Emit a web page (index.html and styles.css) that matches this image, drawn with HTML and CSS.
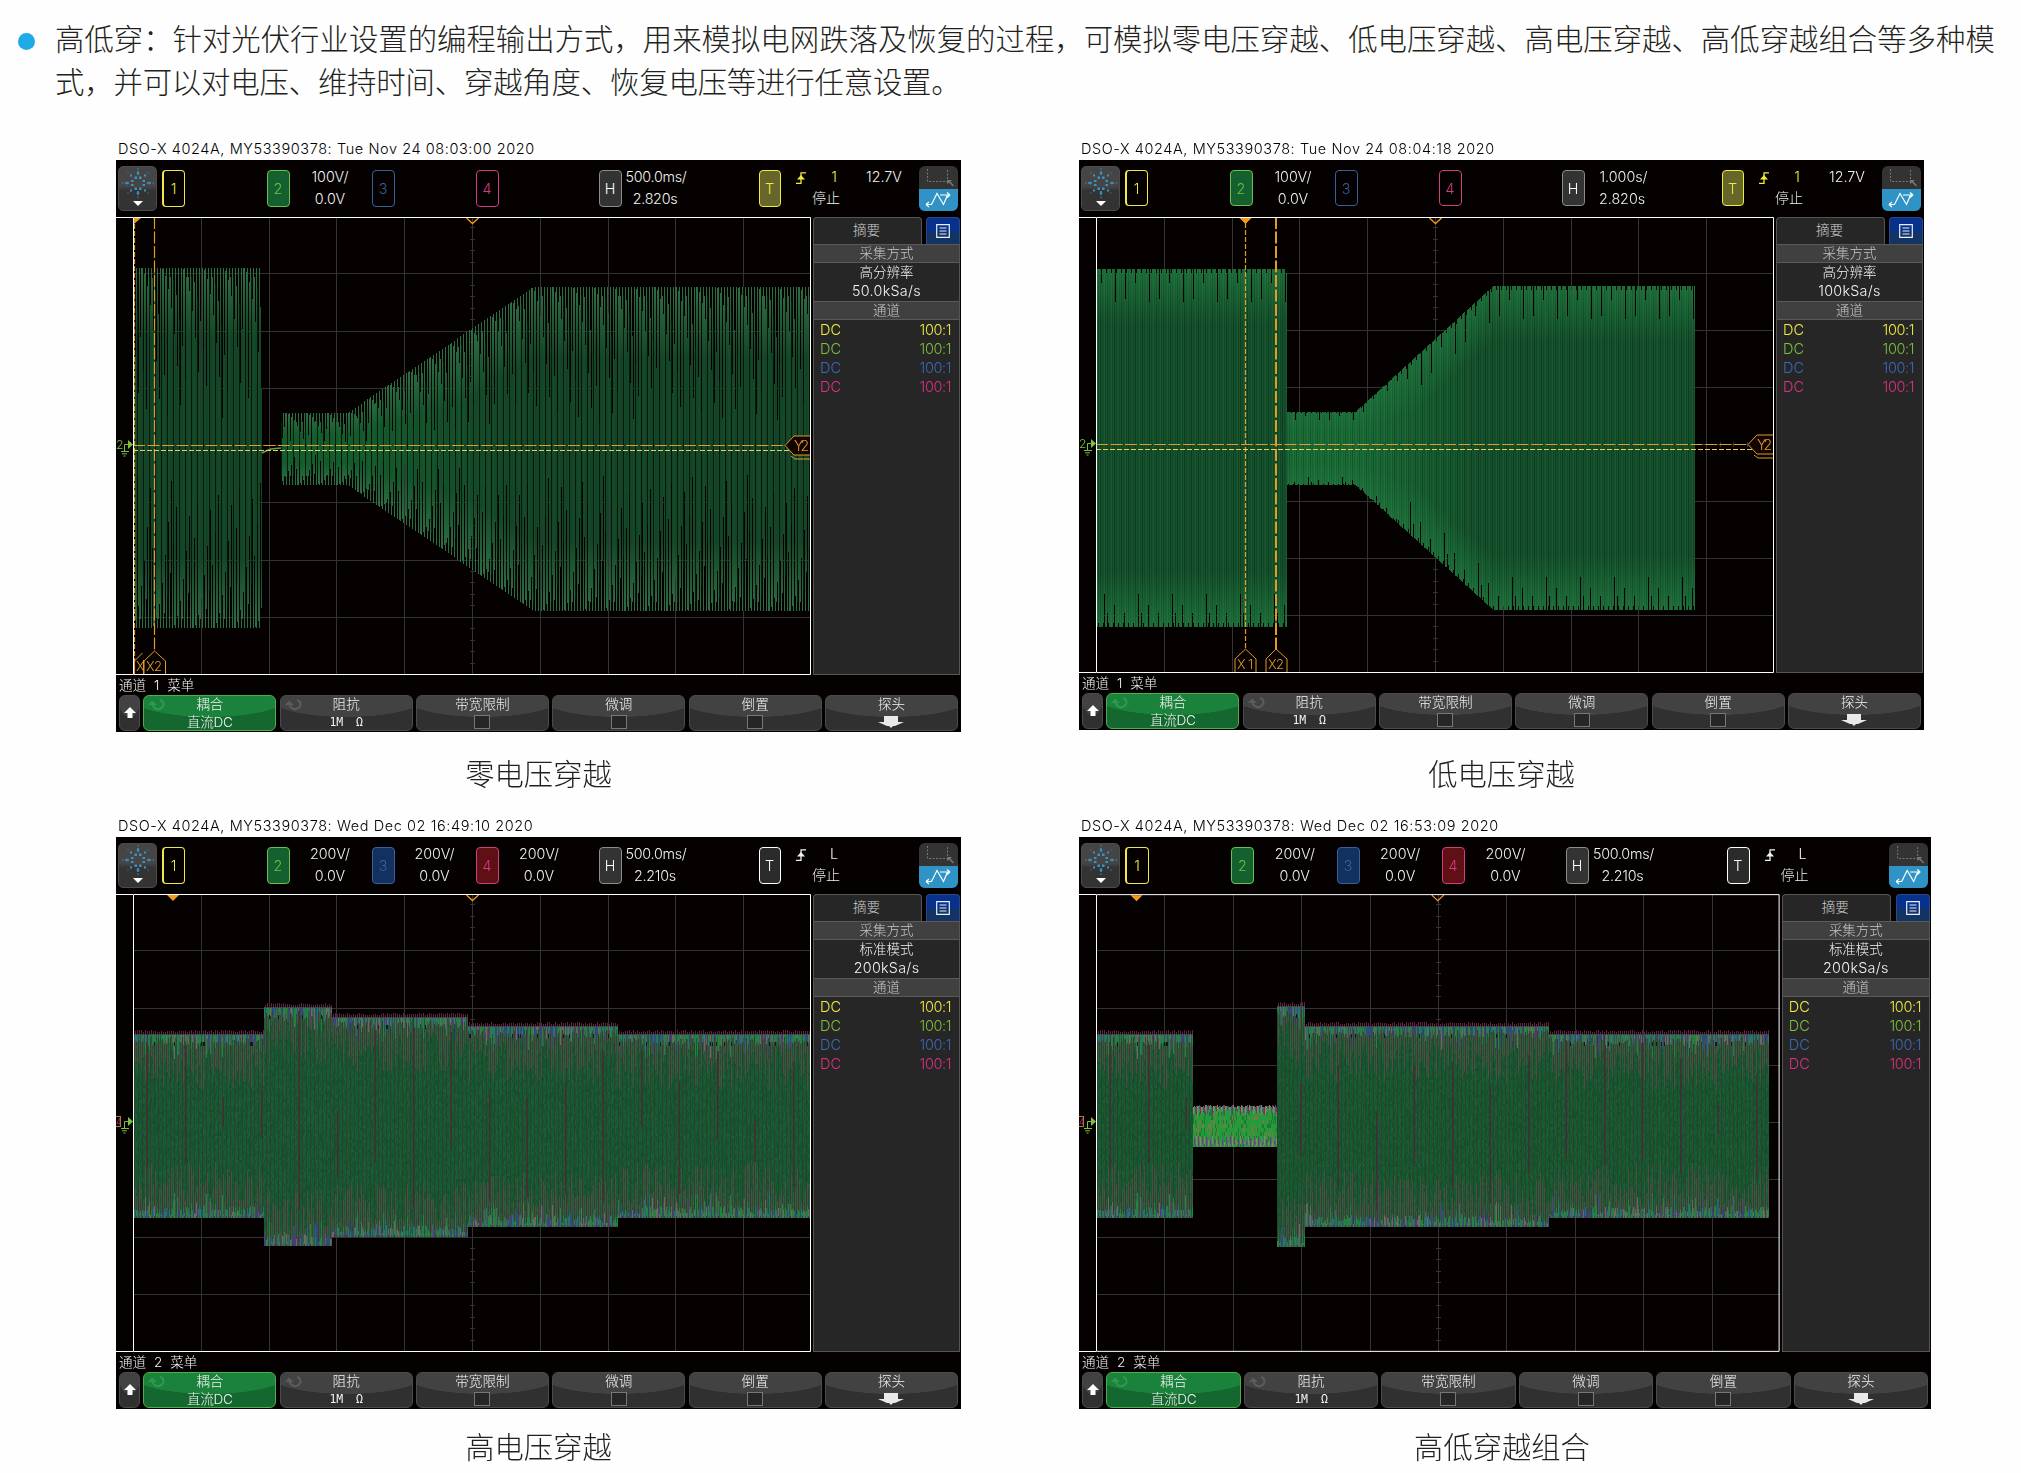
FILE: index.html
```html
<!DOCTYPE html>
<html lang="zh-CN">
<head>
<meta charset="utf-8">
<title>高低穿</title>
<link rel="stylesheet" href="styles.css">
</head>
<body>
<svg class="defs" width="0" height="0">
  <symbol id="spark" viewBox="0 0 32 30">
    <g fill="#3a93c4">
      <path d="M12.500 8.500h2.500v2.500h-2.500zM17 8.500h2.500v2.500H17zM9 12h2.500v2H9zM20.500 12H23v2h-2.500zM9 16h2.500v2H9zM20.500 16H23v2h-2.500zM12.500 19.500h2.500V22h-2.500zM17 19.500h2.500V22H17z"/>
      <path d="M15.200 3h1.600v4h-1.600zM14.500 4.500h3v1h-3zM15.200 23h1.600v4h-1.600zM14.500 24.500h3v1h-3zM3 14.200h4v1.600H3zM4.500 13.500h1v3h-1zM25 14.200h4v1.600h-4zM26.500 13.500h1v3h-1z"/>
      <path d="M8 6.500h2v2H8zM22 6.500h2v2h-2zM8 21.500h2v2H8zM22 21.500h2v2h-2zM15.500 0h1v1.500h-1zM15.500 28.500h1V30h-1zM0 14.500h1.500v1H0zM30.500 14.500H32v1h-1.500zM5.500 4.500h1v1h-1zM25.500 4.500h1v1h-1zM5.500 24.500h1v1h-1zM25.500 24.500h1v1h-1z"/>
    </g>
  </symbol>
  <symbol id="tri" viewBox="0 0 10 5"><path d="M0 0h10L5 5z" fill="#fff"/></symbol>
  <symbol id="edge" viewBox="0 0 10 12"><path d="M0 11.500h5V.800h5" fill="none" stroke="currentColor" stroke-width="1.300"/><path d="M1 7.500h8L5 3z" fill="currentColor"/></symbol>
  <symbol id="zoomicon" viewBox="0 0 39 23"><path d="M8.500 3v12.500h20V3" fill="none" stroke="#777" stroke-dasharray="2 1.500"/><path d="M28 14h5l-1.700 1.500 3.700 4-1 1-4-4-2 1.500z" fill="#777"/></symbol>
  <symbol id="waveicon" viewBox="0 0 39 22"><path d="M7 15.500h5.500L18 4.500l6.500 11L28.500 6H21M24.500 6H30M7 15.500l3-2.500M7 15.500l3 2.500M31 6l-3-2.500M31 6l-3 2.500" fill="none" stroke="#fff" stroke-width="1.200"/></symbol>
  <symbol id="list" viewBox="0 0 14 14"><path d="M.700.700h12.600v12.600H.700zM3.500 4h7M3.500 7h7M3.500 10h7" fill="none" stroke="#e8eefc" stroke-width="1.200"/></symbol>
  <symbol id="up" viewBox="0 0 12 11"><path d="M6 0l6 6H8.500v5h-5V6H0z" fill="#fff"/></symbol>
  <symbol id="down" viewBox="0 0 26 12"><path d="M6 0h14v6h6l-9 4h-2l-2 2-2-2H9L0 6h6z" fill="#e9e9e9"/></symbol>
  <symbol id="turn" viewBox="0 0 18 14"><path d="M12 2c4 1 4.500 5 2 7.500S6 12 4.500 6.500" fill="none" stroke="currentColor" stroke-width="2"/><path d="M0 7l4-4.500L9 7z" fill="currentColor"/></symbol>
  <symbol id="ground" viewBox="0 0 12 18"><path d="M3.500 12V5.500H8M-1 12.500h9M1 14.800h5M2.500 17h2" fill="none" stroke="#7cc03c" stroke-width="1"/><path d="M7 1l5 4.500L7 10z" fill="#7cc03c"/></symbol>
</svg>

<main class="page">
  <section class="intro">
    <i class="bullet"></i>
    <p>高低穿：针对光伏行业设置的编程输出方式，用来模拟电网跌落及恢复的过程，可模拟零电压穿越、低电压穿越、高电压穿越、高低穿越组合等多种模<br><span class="second">式，并可以对电压、维持时间、穿越角度、恢复电压等进行任意设置。</span></p>
  </section>

  <section class="figures">
    <figure>
      <div class="stamp">DSO-X 4024A, MY53390378: Tue Nov 24 08:03:00 2020</div>
      <div class="scope">
        <header class="topbar">
          <div class="logo"><svg class="spark"><use href="#spark"/></svg><svg class="tri"><use href="#tri"/></svg></div>
          <b class="box c1">1</b>
          <b class="box c2 on">2</b><div class="lab l2"><span>100V/</span><span>0.0V</span></div>
          <b class="box c3">3</b>
          <b class="box c4">4</b>
          <b class="box hz">H</b><div class="lab lh"><span>500.0ms/</span><span>2.820s</span></div>
          <b class="box tr yellow">T</b>
          <div class="trig yellow"><svg class="edge"><use href="#edge"/></svg><span class="src">1</span><span class="lvl">12.7V</span><span class="run">停止</span></div>
          <div class="nav"><svg><use href="#zoomicon"/></svg><svg><use href="#waveicon"/></svg></div>
        </header>
        <div class="main">
          <div class="gutter"><span class="g2">2</span><svg><use href="#ground"/></svg></div>
          <div class="plot">
            <canvas width="678" height="458" data-trace="zero"></canvas>
            <svg viewBox="0 0 678 458">
              <path d="M1 1h7L1 7z" fill="#f29a1f"/>
              <path class="chev" d="M333.500 1l6 5.500 6-5.500"/>
              <path class="cx" d="M1.500 0v458"/><path class="cx long" d="M21.500 0v434"/>
              <path class="cy long" d="M0 228.500h655"/><path class="cy pale" d="M0 233.500h657"/>
              <path class="flag" d="M1.500 457v-13l8-8M10.500 443v14"/><text class="ft" x="3" y="454">X</text>
              <path class="flag" d="M11 457v-13l10.500-10L32.500 444v13"/><text class="ft" x="13" y="454" textLength="16">X2</text>
              <path class="flag" d="M658 239l4 3h15"/><path class="flag fill" d="M677 219h-16l-9 9.500 9 9.500h16"/><text class="ft y" x="661" y="234" textLength="15">Y2</text>
              <path class="frame" d="M.500.500h677v457H.500z"/>
            </svg>
          </div>
          <aside class="side">
            <div class="tabs"><span>摘要</span><i><svg><use href="#list"/></svg></i></div>
            <h4>采集方式</h4><div class="acq"><span>高分辨率</span><span>50.0kSa/s</span></div><h4>通道</h4>
            <ul><li class="y">DC<em>100:1</em></li><li class="g">DC<em>100:1</em></li><li class="b">DC<em>100:1</em></li><li class="m">DC<em>100:1</em></li></ul>
          </aside>
        </div>
        <div class="menu">通道 1 菜单</div>
        <footer class="keys">
          <div class="key upkey"><svg><use href="#up"/></svg></div>
          <div class="key act"><svg class="turn"><use href="#turn"/></svg><span>耦合</span><span>直流DC</span></div>
          <div class="key"><svg class="turn"><use href="#turn"/></svg><span>阻抗</span><span class="ohm">1M&nbsp; Ω</span></div>
          <div class="key"><span>带宽限制</span><i></i></div>
          <div class="key"><span>微调</span><i></i></div>
          <div class="key"><span>倒置</span><i></i></div>
          <div class="key"><span>探头</span><svg class="down"><use href="#down"/></svg></div>
        </footer>
      </div>
      <figcaption>零电压穿越</figcaption>
    </figure>

    <figure>
      <div class="stamp">DSO-X 4024A, MY53390378: Tue Nov 24 08:04:18 2020</div>
      <div class="scope short">
        <header class="topbar">
          <div class="logo"><svg class="spark"><use href="#spark"/></svg><svg class="tri"><use href="#tri"/></svg></div>
          <b class="box c1">1</b>
          <b class="box c2 on">2</b><div class="lab l2"><span>100V/</span><span>0.0V</span></div>
          <b class="box c3">3</b>
          <b class="box c4">4</b>
          <b class="box hz">H</b><div class="lab lh"><span>1.000s/</span><span>2.820s</span></div>
          <b class="box tr yellow">T</b>
          <div class="trig yellow"><svg class="edge"><use href="#edge"/></svg><span class="src">1</span><span class="lvl">12.7V</span><span class="run">停止</span></div>
          <div class="nav"><svg><use href="#zoomicon"/></svg><svg><use href="#waveicon"/></svg></div>
        </header>
        <div class="main">
          <div class="gutter"><span class="g2">2</span><svg><use href="#ground"/></svg></div>
          <div class="plot">
            <canvas width="678" height="456" data-trace="low"></canvas>
            <svg viewBox="0 0 678 456">
              <path d="M143.500 1h12l-6 6z" fill="#f29a1f"/>
              <path class="chev" d="M333.500 1l6 5.500 6-5.500"/>
              <path class="cx" d="M149.500 6v427"/><path class="cx long bold" d="M180 0v433"/>
              <path class="cy long" d="M0 227.500h655"/><path class="cy pale" d="M0 232.500h657"/>
              <path class="flag" d="M139 455v-13l10.500-10L160 442v13"/><text class="ft" x="141" y="452" textLength="16">X1</text>
              <path class="flag" d="M170 455v-13l10-10L191 442v13"/><text class="ft" x="172" y="452" textLength="16">X2</text>
              <path class="flag" d="M658 238l4 3h15"/><path class="flag fill" d="M677 218h-16l-9 9.500 9 9.500h16"/><text class="ft y" x="661" y="233" textLength="15">Y2</text>
              <path class="frame" d="M.500.500h677v455H.500z"/>
            </svg>
          </div>
          <aside class="side">
            <div class="tabs"><span>摘要</span><i><svg><use href="#list"/></svg></i></div>
            <h4>采集方式</h4><div class="acq"><span>高分辨率</span><span>100kSa/s</span></div><h4>通道</h4>
            <ul><li class="y">DC<em>100:1</em></li><li class="g">DC<em>100:1</em></li><li class="b">DC<em>100:1</em></li><li class="m">DC<em>100:1</em></li></ul>
          </aside>
        </div>
        <div class="menu">通道 1 菜单</div>
        <footer class="keys">
          <div class="key upkey"><svg><use href="#up"/></svg></div>
          <div class="key act"><svg class="turn"><use href="#turn"/></svg><span>耦合</span><span>直流DC</span></div>
          <div class="key"><svg class="turn"><use href="#turn"/></svg><span>阻抗</span><span class="ohm">1M&nbsp; Ω</span></div>
          <div class="key"><span>带宽限制</span><i></i></div>
          <div class="key"><span>微调</span><i></i></div>
          <div class="key"><span>倒置</span><i></i></div>
          <div class="key"><span>探头</span><svg class="down"><use href="#down"/></svg></div>
        </footer>
      </div>
      <figcaption>低电压穿越</figcaption>
    </figure>

    <figure>
      <div class="stamp">DSO-X 4024A, MY53390378: Wed Dec 02 16:49:10 2020</div>
      <div class="scope">
        <header class="topbar">
          <div class="logo"><svg class="spark"><use href="#spark"/></svg><svg class="tri"><use href="#tri"/></svg></div>
          <b class="box c1">1</b>
          <b class="box c2 on">2</b><div class="lab l2"><span>200V/</span><span>0.0V</span></div>
          <b class="box c3 on">3</b><div class="lab l3"><span>200V/</span><span>0.0V</span></div>
          <b class="box c4 on">4</b><div class="lab l4"><span>200V/</span><span>0.0V</span></div>
          <b class="box hz">H</b><div class="lab lh"><span>500.0ms/</span><span>2.210s</span></div>
          <b class="box tr">T</b>
          <div class="trig"><svg class="edge"><use href="#edge"/></svg><span class="src">L</span><span class="run">停止</span></div>
          <div class="nav"><svg><use href="#zoomicon"/></svg><svg><use href="#waveicon"/></svg></div>
        </header>
        <div class="main">
          <div class="gutter"><span class="g2 multi">4</span><svg><use href="#ground"/></svg></div>
          <div class="plot">
            <canvas width="678" height="458" data-trace="high"></canvas>
            <svg viewBox="0 0 678 458">
              <path d="M34 1h12l-6 6z" fill="#f29a1f"/>
              <path class="chev" d="M333.500 1l6 5.500 6-5.500"/>
              <path class="frame" d="M.500.500h677v457H.500z"/>
            </svg>
          </div>
          <aside class="side">
            <div class="tabs"><span>摘要</span><i><svg><use href="#list"/></svg></i></div>
            <h4>采集方式</h4><div class="acq"><span>标准模式</span><span>200kSa/s</span></div><h4>通道</h4>
            <ul><li class="y">DC<em>100:1</em></li><li class="g">DC<em>100:1</em></li><li class="b">DC<em>100:1</em></li><li class="m">DC<em>100:1</em></li></ul>
          </aside>
        </div>
        <div class="menu">通道 2 菜单</div>
        <footer class="keys">
          <div class="key upkey"><svg><use href="#up"/></svg></div>
          <div class="key act"><svg class="turn"><use href="#turn"/></svg><span>耦合</span><span>直流DC</span></div>
          <div class="key"><svg class="turn"><use href="#turn"/></svg><span>阻抗</span><span class="ohm">1M&nbsp; Ω</span></div>
          <div class="key"><span>带宽限制</span><i></i></div>
          <div class="key"><span>微调</span><i></i></div>
          <div class="key"><span>倒置</span><i></i></div>
          <div class="key"><span>探头</span><svg class="down"><use href="#down"/></svg></div>
        </footer>
      </div>
      <figcaption>高电压穿越</figcaption>
    </figure>

    <figure class="wide">
      <div class="stamp">DSO-X 4024A, MY53390378: Wed Dec 02 16:53:09 2020</div>
      <div class="scope">
        <header class="topbar">
          <div class="logo"><svg class="spark"><use href="#spark"/></svg><svg class="tri"><use href="#tri"/></svg></div>
          <b class="box c1">1</b>
          <b class="box c2 on">2</b><div class="lab l2"><span>200V/</span><span>0.0V</span></div>
          <b class="box c3 on">3</b><div class="lab l3"><span>200V/</span><span>0.0V</span></div>
          <b class="box c4 on">4</b><div class="lab l4"><span>200V/</span><span>0.0V</span></div>
          <b class="box hz">H</b><div class="lab lh"><span>500.0ms/</span><span>2.210s</span></div>
          <b class="box tr">T</b>
          <div class="trig"><svg class="edge"><use href="#edge"/></svg><span class="src">L</span><span class="run">停止</span></div>
          <div class="nav"><svg><use href="#zoomicon"/></svg><svg><use href="#waveicon"/></svg></div>
        </header>
        <div class="main">
          <div class="gutter"><span class="g2 multi">4</span><svg><use href="#ground"/></svg></div>
          <div class="plot">
            <canvas width="684" height="458" data-trace="combo"></canvas>
            <svg viewBox="0 0 684 458">
              <path d="M34.500 1h12l-6 6z" fill="#f29a1f"/>
              <path class="chev" d="M336 1l6 5.500 6-5.500"/>
              <path class="frame" d="M.500.500h683v457H.500z"/>
            </svg>
          </div>
          <aside class="side">
            <div class="tabs"><span>摘要</span><i><svg><use href="#list"/></svg></i></div>
            <h4>采集方式</h4><div class="acq"><span>标准模式</span><span>200kSa/s</span></div><h4>通道</h4>
            <ul><li class="y">DC<em>100:1</em></li><li class="g">DC<em>100:1</em></li><li class="b">DC<em>100:1</em></li><li class="m">DC<em>100:1</em></li></ul>
          </aside>
        </div>
        <div class="menu">通道 2 菜单</div>
        <footer class="keys">
          <div class="key upkey"><svg><use href="#up"/></svg></div>
          <div class="key act"><svg class="turn"><use href="#turn"/></svg><span>耦合</span><span>直流DC</span></div>
          <div class="key"><svg class="turn"><use href="#turn"/></svg><span>阻抗</span><span class="ohm">1M&nbsp; Ω</span></div>
          <div class="key"><span>带宽限制</span><i></i></div>
          <div class="key"><span>微调</span><i></i></div>
          <div class="key"><span>倒置</span><i></i></div>
          <div class="key"><span>探头</span><svg class="down"><use href="#down"/></svg></div>
        </footer>
      </div>
      <figcaption>高低穿越组合</figcaption>
    </figure>
  </section>
</main>
<script src="traces.js"></script>
</body>
</html>
```

FILE: styles.css
```css
* { box-sizing: border-box; }
body { margin: 0; background: #fefefe; color: #231f20; font-family: "Noto Sans CJK SC", sans-serif; }
.defs { display: block; height: 0; }
.page { width: 2021px; height: 1473px; overflow: hidden; }

.intro { display: flex; height: 137px; padding: 16px 0 0 18px; }
.bullet { flex: none; width: 17px; height: 17px; margin-top: 17px; border-radius: 50%; background: #1eaae6; }
.intro p { margin: 0 0 0 20px; font-size: 29.400px; font-weight: 300; line-height: 42.500px; white-space: nowrap; }
.second { letter-spacing: -.18px; }

.figures { display: grid; grid-template-columns: 845px 852px; grid-template-rows: 677px 659px; column-gap: 118px; padding-left: 116px; }
figure { margin: 0; width: 845px; }
figure.wide { width: 852px; }
.stamp { height: 23px; padding-left: 2px; font: 300 14.500px/24px Inter, "Liberation Sans", sans-serif; letter-spacing: .58px; color: #000; white-space: nowrap; }
figcaption { height: 44px; margin-top: 18px; text-align: center; font-size: 29.300px; font-weight: 300; line-height: 44px; }
figure:nth-child(n+3) figcaption { margin-top: 14px; }
figure.wide figcaption { padding-right: 6px; }

.scope { --plot: 458px; height: 572px; background: #050101; color: #f2f2f2; font: 300 14.300px/22px Inter, "Noto Sans CJK SC", sans-serif; }
.scope.short { --plot: 456px; height: 570px; }
.short + figcaption { margin-top: 20px; }

.topbar {
  display: grid; height: 57px;
  grid-template-columns: minmax(0,2fr) minmax(0,39fr) minmax(0,5fr) minmax(0,23fr) minmax(0,82fr) minmax(0,23fr) minmax(0,82fr) minmax(0,23fr) minmax(0,81fr) minmax(0,23fr) minmax(0,82fr) minmax(0,18fr) minmax(0,23fr) minmax(0,68fr) minmax(0,69fr) minmax(0,22fr) minmax(0,138fr) minmax(0,39fr) minmax(0,3fr);
}
.topbar > * { grid-row: 1; }
.logo { grid-column: 2; display: flex; flex-direction: column; align-items: center; height: 45px; margin-top: 6px; border: 1px solid #4c4c4c; border-radius: 5px; background: linear-gradient(#454545 45%, #333 55%); }
.spark { width: 32px; height: 30px; margin-top: 1px; }
.tri { width: 10px; height: 5px; margin-top: 3px; }
.box { height: 37px; margin-top: 10px; padding-right: 1px; border: 1px solid; border-radius: 4px; text-align: center; font-weight: 300; font-size: 14.300px; line-height: 36px; }
.short .box { height: 36px; }
.c1 { grid-column: 4; color: #f0e84a; border-left-width: 2px; }
.c2 { grid-column: 6; color: #6cc04a; }
.c3 { grid-column: 8; color: #3a5f9f; }
.c4 { grid-column: 10; color: #d03c80; }
.c2.on { background: #14602f; }
.c3.on { background: #12315f; }
.c4.on { background: #5e1014; }
.hz { grid-column: 13; color: #fff; border-color: #8c8c8c; background: #333; }
.tr { grid-column: 16; color: #fff; background: #2b2b2b; }
.tr.yellow { color: #f2ec3c; background: #66662a; }
.lab { display: flex; flex-direction: column; align-items: center; padding: 6px 2px 0 0; white-space: nowrap; }
.l2 { grid-column: 7; }
.l3 { grid-column: 9; }
.l4 { grid-column: 11; }
.lh { grid-column: 14; padding-right: 0; letter-spacing: -.25px; }
.lh span + span { padding-right: 2px; }
.short .lh { padding-left: 9px; letter-spacing: 0; }
.short .lh span:last-child { padding-right: 3px; }
.trig { grid-column: 17; display: grid; grid-template-columns: 15px 10px 15px 26px 12px 50px; grid-template-rows: 22px 22px; padding-top: 6px; text-align: center; }
.edge { grid-column: 2; width: 10px; height: 12px; margin-top: 6px; }
.trig.yellow .edge, .trig.yellow .src { color: #f2ec3c; }
.src { grid-column: 4; }
.lvl { grid-column: 6; white-space: nowrap; }
.run { grid-row: 2; grid-column: 1 / 6; justify-self: start; margin-left: 31px; font-size: 14px; line-height: 20px; }
.nav { grid-column: 18; height: 45px; margin-top: 6px; border-radius: 6px; overflow: hidden; background: #333; }
.nav svg { display: block; width: 100%; height: 23px; }
.nav svg + svg { height: 22px; background: #2f93c6; }

.main { display: grid; height: var(--plot); grid-template-columns: minmax(0,17fr) minmax(0,678fr) minmax(0,2fr) minmax(0,147fr) minmax(0,1fr); }
.gutter { display: flex; align-items: flex-start; border: solid #fff; border-width: 1px 0; padding-top: 219px; overflow: hidden; }
.g2 { width: 5px; color: #7cc03c; font-size: 12px; line-height: 16px; letter-spacing: -2px; }
.g2.multi { width: 5px; height: 11px; margin-top: 2px; border: 1px solid #a0883a; border-left: 0; color: #d03c80; font-size: 9px; line-height: 9px; }
.gutter svg { flex: none; width: 12px; height: 18px; margin-top: 2px; overflow: visible; }
.short .gutter { padding-top: 218px; }
.plot { display: grid; overflow: hidden; }
.plot > * { grid-area: 1 / 1; width: 100%; height: 100%; display: block; }
.plot path { fill: none; }
.plot path[fill] { fill: #f29a1f; }
.frame { stroke: #fff; }
.chev { stroke: #f29a1f; stroke-width: 1.300; }
.cx, .cy { stroke: #e39a2b; stroke-width: 1.200; stroke-dasharray: 5 2; }
.cx.long, .cy.long { stroke-dasharray: 12 2.500; }
.cx.bold { stroke-width: 2; }
.cy.pale { stroke: #e6cf5c; }
.flag { stroke: #e39a2b; }
.plot .fill { fill: #120400; }
.ft { fill: #e39a2b; font: 300 13px Inter, sans-serif; }
.ft.y { font-size: 14px; }

.side { grid-column: 4; display: flex; flex-direction: column; background: #262626; border: 1px solid #555; border-top: 0; color: #f4f4f4; }
.tabs { flex: none; display: flex; justify-content: space-between; height: 26.500px; margin: 0 -1px; background: #050101; font-size: 13.600px; line-height: 24px; }
.tabs span { width: 109px; padding-right: 2px; text-align: center; color: #d0d0d0; background: #262626; border: 1px solid #555; border-bottom: 0; border-radius: 4px 4px 0 0; }
.tabs i { display: flex; justify-content: center; align-items: center; width: 34px; border: 1px solid #2c4a80; border-bottom: 0; border-radius: 4px 4px 0 0; background: linear-gradient(#07318c 50%, #133462 55%); }
.tabs svg { width: 14px; height: 14px; }
.side h4 { flex: none; margin: 0; height: 19px; border: solid #5a5a5a; border-width: 1px 0; background: #404040; color: #c8c8c8; font-size: 13.500px; font-weight: 300; line-height: 16.500px; text-align: center; }
.acq { flex: none; display: flex; flex-direction: column; align-items: center; height: 38px; font-size: 13.500px; line-height: 19px; }
.acq span:first-child { line-height: 18.500px; }
.acq span + span { font-size: 14.300px; letter-spacing: .3px; }
.side ul { margin: 0; padding: .500px 8px 0 6px; list-style: none; font-size: 14.500px; }
.side li { display: flex; justify-content: space-between; height: 19.100px; line-height: 19px; }
.side li:first-letter { letter-spacing: -.5px; }
.side em { font-style: normal; letter-spacing: -.4px; }
.y { color: #f0ea40; }
.g { color: #7cc03c; }
.b { color: #3a68b8; }
.m { color: #dc3082; }

.menu { height: 20px; padding-left: 3px; font-size: 13.600px; line-height: 20px; word-spacing: 4px; }
.keys { display: grid; grid-template-columns: minmax(0,21fr) repeat(6, minmax(0,133fr)); column-gap: 3.300px; height: 36px; padding: 0 3px; }
.key { position: relative; display: flex; flex-direction: column; align-items: center; border: 1px solid #4b4b4b; border-radius: 6px; color: #f4f4f4; font-size: 13.600px; line-height: 17.500px; background: radial-gradient(ellipse 62% 62% at 50% 0, #424242 98%, #303030 100%); }
.key span + span { line-height: 16px; letter-spacing: -.3px; }
.key.act { border-color: #4fae48; background: radial-gradient(ellipse 62% 62% at 50% 0, #1a823b 98%, #14682f 100%); }
.key .turn { position: absolute; left: 4px; top: 2px; width: 18px; height: 14px; color: #5c5c5c; }
.key.act .turn { color: #2f9a4c; }
.key .ohm { white-space: pre; font: 400 11.500px/16px "DejaVu Sans Mono", monospace; }
.key i { width: 16px; height: 14px; margin-top: 1px; border: 1px solid #777; background: #262626; }
.key .down { width: 26px; height: 12px; margin-top: 2px; }
.upkey { justify-content: center; }
.upkey svg { width: 12px; height: 11px; margin-bottom: 2px; }
```

FILE: traces.js
```js
// Envelopes: [xStart, xEnd, topStart, topEnd, bottomStart, bottomEnd]
const TRACES = {
  zero: { mode: "sparse", seg: [[1,129,51,51,411,411],[148,214,196,196,268,268],[214,400,196,70,268,394],[400,677,70,70,394,394]] },
  low: { mode: "dense", seg: [[1,191,52,52,410,410],[191,259,195,195,268,268],[259,397,195,69,268,393],[397,599,69,69,393,393]] },
  high: { mode: "three", seg: [[1,131,138,138,323,323],[131,199,111,111,351,351],[199,335,121,121,342,342],[335,485,130,130,332,332],[485,677,138,138,323,323]] },
  combo: { mode: "three", seg: [[1,97,138,138,323,323],[97,181,210,210,253,253,1],[181,209,110,110,352,352],[209,453,130,130,332,332],[453,673,138,138,323,323]] }
};

function rng(seed) {
  return () => { seed = (seed * 1664525 + 1013904223) >>> 0; return seed / 4294967296; };
}

function graticule(c, w, h) {
  c.fillStyle = "#050101";
  c.fillRect(0, 0, w, h);
  c.fillStyle = "#343232";
  for (let i = 1; i < 10; i++) c.fillRect(Math.round(i * w / 10), 0, 1, h);
  for (let i = 1; i < 8; i++) c.fillRect(0, Math.round(i * h / 8 - 1), w, 1);
  for (let i = 1; i < 40; i++) c.fillRect(Math.round(w / 2) - 2, Math.round(i * h / 40 - 1), 5, 1);
  for (let i = 1; i < 50; i++) c.fillRect(Math.round(i * w / 50), Math.round(h / 2) - 3, 1, 5);
}

function vline(c, x, a, b, color) {
  c.fillStyle = color;
  c.fillRect(x, Math.round(a), 1, Math.round(b) - Math.round(a));
}

function draw(canvas) {
  const { mode, seg } = TRACES[canvas.dataset.trace];
  const c = canvas.getContext("2d"), w = canvas.width, h = canvas.height, r = rng(7);
  graticule(c, w, h);
  for (const [x0, x1, t0, t1, b0, b1, bright] of seg) {
    for (let x = x0; x < x1; x++) {
      const k = (x - x0) / (x1 - x0), top = t0 + (t1 - t0) * k, bot = b0 + (b1 - b0) * k, H = bot - top;
      const shade = Math.max(0, Math.min(1, (300 - H) / 220));
      if (mode === "sparse") {
        const g = c.createLinearGradient(0, top, 0, bot), d = Math.min(.3, 70 / H);
        const s = x % 5 < 2 ? 6 : 0;
        const mid = `rgb(20,${68 + s + shade * 22},${39 + shade * 6})`;
        g.addColorStop(0, "#2f6f45"); g.addColorStop(d, mid); g.addColorStop(1 - d, mid); g.addColorStop(1, "#2f6f45");
        // Aliasing between the 50 Hz wave and the pixel columns
        let a = 0, b = 0;
        if (x % 3 !== 0) {
          a = H * .42 * Math.pow((x * 0.38197) % 1, 2);
          b = H * .42 * Math.pow((x * 0.38197 + .47) % 1, 2);
        }
        if (x % 3 === 1) { a = Math.max(a, 9); b = Math.max(b, 9); }
        vline(c, x, top + a, bot - b, g);
        if (x % 6 === 4) vline(c, x, top, bot, "rgba(3,10,5,.78)");
      } else if (mode === "dense") {
        const g = c.createLinearGradient(0, top, 0, bot), d = Math.min(.3, 55 / H), s = [0, 5, -4, 3, -9, 2, -3][x % 7];
        const tip = `rgb(${30 + s},${110 + s},${58 + s})`;
        const mid = `rgb(${20 + s + shade * 6},${78 + s * 2 + shade * 26},${42 + s + shade * 10})`;
        g.addColorStop(0, tip); g.addColorStop(d, mid); g.addColorStop(1 - d, mid); g.addColorStop(1, tip);
        const deep = x % 34 === 19 ? 33 : x % 34 === 29 ? 30 : x % 34 === 5 ? 14 : x % 5 === 0 ? 4 : 0;
        const low = (x + 11) % 34 === 19 ? 33 : (x + 11) % 34 === 29 ? 22 : (x + 11) % 17 === 5 ? 14 : x % 5 === 2 ? 4 : 0;
        const q = H < 150 ? .25 : 1;
        vline(c, x, top + deep * q, bot - low * q, g);
      } else {
        const n = r(), m = r();
        if (bright) {
          for (let y = top + 4; y < bot; y += 4) vline(c, x, y, Math.min(bot, y + 4), r() > .3 ? "#259a3a" : r() > .5 ? "#6f8044" : "#1b7a34");
          vline(c, x, top + 1 + n * 2, top + 4 + m * 8, ["#7a3058", "#8f8464", "#2fa046", "#5c4890"][x % 4]);
          vline(c, x, bot - 4 - m * 8, bot - n * 3, ["#4a6a90", "#8f8464", "#2fa046", "#6e4070"][(x + 1) % 4]);
          continue;
        }
        const up = top + 2, dn = bot + 1;
        for (let y = up; y < dn; y += 3) {
          const v = Math.round(r() * 12);
          vline(c, x, y, Math.min(dn, y + 3), `rgb(${16 + v},${82 + v},${42 + v})`);
        }
        if (x % 4 === 1) vline(c, x, up, dn, "rgba(52,56,46,.7)");
        if (x % 2 === 0) {
          vline(c, x, up, up + 12 + n * 44, "rgba(82,80,72,.8)");
          vline(c, x, dn - 12 - m * 44, dn, "rgba(82,80,72,.8)");
        }
        const cols = ["#288044", "#2a6c74", "#23803c", "#53386c", "#6e6860", "#2a4c80", "#288044"];
        const len = m > .8 ? 22 : 9;
        vline(c, x, up + 1, up + 3 + n * len, cols[Math.floor(r() * 7)]);
        vline(c, x, dn - 3 - n * len, dn - (x % 3 ? 0 : 2), cols[Math.floor(r() * 7)]);
        if (x % 2 === 0) vline(c, x, top - r() * 2, top + 2, "#64204a");
        if (n > .95) vline(c, x, up + 8, up + 12, "#0a1f12");
        if (x % 38 === 14) vline(c, x, top + H * .48 * m, top + H * (.5 + .48 * n), "rgba(96,24,58,.8)");
      }
    }
  }
  if (mode === "sparse") {
    c.strokeStyle = "#62a83c";
    c.lineWidth = 1.5;
    c.beginPath();
    c.moveTo(129, 236); c.lineTo(133, 234); c.lineTo(138, 232); c.lineTo(148, 231);
    c.stroke();
  }
}

document.querySelectorAll("canvas").forEach(draw);
```
